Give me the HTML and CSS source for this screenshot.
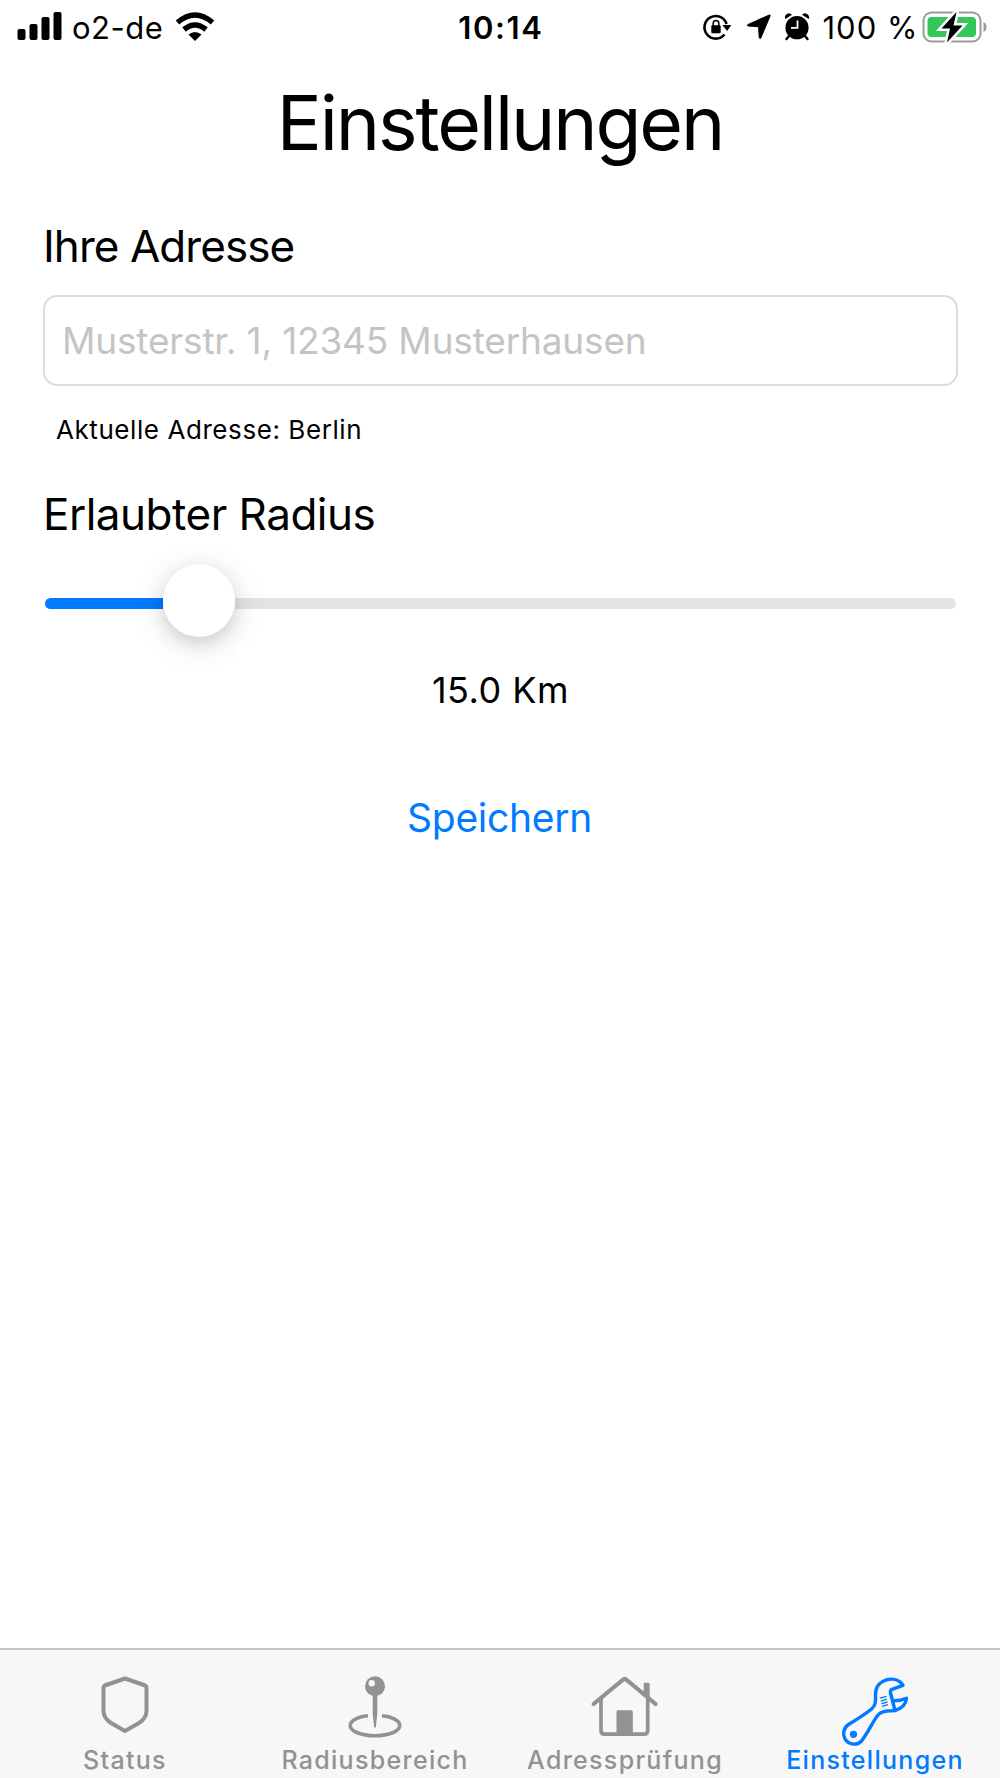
FILE: index.html
```html
<!DOCTYPE html>
<html lang="de">
<head>
    <meta charset="UTF-8">
    <title>Einstellungen</title>
    <link rel="stylesheet" href="styles.css">
</head>
<body>
    <!-- Status bar -->
    <div class="status-bar">
        <svg class="signal" width="46" height="30" viewBox="0 0 46 30">
            <rect x="0.5" y="18" width="8" height="11" rx="2"/>
            <rect x="12.5" y="13" width="8" height="16" rx="2"/>
            <rect x="24.5" y="6" width="8" height="23" rx="2"/>
            <rect x="36.5" y="1" width="8" height="28" rx="2"/>
        </svg>
        <span class="carrier">o2-de</span>
        <svg class="wifi" width="40" height="30" viewBox="0 0 40 30">
            <path d="M2.5 10.5 Q20 -4.5 37.5 10.5" fill="none" stroke="#000" stroke-width="5.5"/>
            <path d="M9 17.5 Q20 8.5 31 17.5" fill="none" stroke="#000" stroke-width="5.5"/>
            <path d="M13.5 22.5 Q20 17.5 26.5 22.5 L20 29 Z"/>
        </svg>
        <span class="time">10:14</span>
        <svg class="lock" width="30" height="28" viewBox="0 0 30 28">
            <path d="M22.5 21.5 A11.3 11.3 0 1 1 24.6 11" fill="none" stroke="#000" stroke-width="2.6"/>
            <path d="M20.3 12 H29.2 L25.2 18 Z"/>
            <rect x="9.3" y="12.3" width="9.4" height="8" rx="1.2"/>
            <path d="M11.2 13 V10.5 a2.8 3 0 0 1 5.6 0 V13" fill="none" stroke="#000" stroke-width="1.5"/>
        </svg>
        <svg class="arrow" width="26" height="26" viewBox="0 0 26 26">
            <path d="M24.3 1.5 L14.8 24 Q13.8 25.3 13.2 23.5 L12.6 12.7 L2 12 Q0.500 11.500 2 10.5 L23.3 1 Z" stroke="#000" stroke-linejoin="round"/>
        </svg>
        <svg class="alarm" width="26" height="28" viewBox="0 0 26 28">
            <circle cx="13" cy="14.7" r="11.6"/>
            <path d="M1.3 6 A4 4 0 0 1 8 1.8 Z M24.7 6 A4 4 0 0 0 18 1.8 Z"/>
            <path d="M5 23 L2.5 26 M21 23 L23.5 26" stroke="#000" stroke-width="2.4" stroke-linecap="round"/>
            <path d="M13.5 7.5 V14.8 H7" fill="none" stroke="#fff" stroke-width="1.8"/>
        </svg>
        <span class="percent">100 %</span>
        <svg class="battery" width="66" height="34" viewBox="0 0 66 34">
            <rect x="1.5" y="2.5" width="57" height="29" rx="8" fill="none" stroke="#9b9b9b" stroke-width="2"/>
            <rect x="5.5" y="7" width="48.5" height="20" rx="4" fill="#34c759"/>
            <path d="M61.5 12 q3 1 3 5 t-3 5 Z" fill="#9b9b9b"/>
            <path d="M34.5 2 L19.5 18.5 H28 L25 32.5 L40.5 15.5 H31.5 Z" stroke="#fff" stroke-width="5" paint-order="stroke"/>
        </svg>
    </div>

    <h1>Einstellungen</h1>

    <form class="settings">
        <label for="address">Ihre Adresse</label>
        <input type="text" id="address" placeholder="Musterstr. 1, 12345 Musterhausen">
        <p class="current">Aktuelle Adresse: Berlin</p>

        <label class="radius">Erlaubter Radius</label>
        <div class="slider">
            <div class="fill"></div>
            <div class="thumb"></div>
            <div class="rest"></div>
        </div>
        <p class="value">15.0 Km</p>
        <button type="button">Speichern</button>
    </form>

    <!-- Bottom tabs -->
    <nav class="tabs">
        <a class="tab">
            <svg width="100" height="80" viewBox="0 0 100 80">
                <path d="M50 10.5 L70.3 17.5 Q71.5 18 71.5 19.5 V43 Q71.5 50 64 55 L50 63 L36 55 Q28.5 50 28.5 43 V19.5 Q28.5 18 29.7 17.5 Z" fill="none" stroke="#929292" stroke-width="4" stroke-linejoin="round"/>
            </svg>
            <span>Status</span>
        </a>
        <a class="tab">
            <svg width="100" height="80" viewBox="0 0 100 80">
                <path d="M43 47.8 C32 48.8 25.2 53 25.2 57.5 C25.2 63.2 36 67.7 50 67.7 S74.8 63.2 74.8 57.5 C74.8 53 68 48.8 57 47.8" fill="none" stroke="#929292" stroke-width="3.6"/>
                <path d="M47.7 26 H52.3 V46 L50.8 59.5 H49.2 L47.7 46 Z" fill="#929292"/>
                <circle cx="50" cy="18.3" r="10" fill="#929292"/>
                <circle cx="46.7" cy="15.3" r="3.2" fill="#f7f7f7"/>
            </svg>
            <span>Radiusbereich</span>
        </a>
        <a class="tab">
            <svg width="100" height="80" viewBox="0 0 100 80">
                <path d="M26 31 V62.5 Q26 66.2 29.7 66.2 H69 Q72.7 66.2 72.7 62.5 V31" fill="none" stroke="#929292" stroke-width="3.7"/>
                <path d="M18.6 36 L48.3 11.5 Q49.7 10.5 51 11.5 L80.6 36" fill="none" stroke="#929292" stroke-width="4.2" stroke-linecap="round"/>
                <rect x="41.5" y="42.3" width="16.3" height="25" rx="1.5" fill="#929292"/>
                <path d="M68.7 26 V16 Q68.7 14.7 70 14.7 H73.4 Q74.7 14.7 74.7 16 V31 Z" fill="#929292"/>
            </svg>
            <span>Adressprüfung</span>
        </a>
        <a class="tab active">
            <svg width="100" height="80" viewBox="0 0 100 80">
                <path d="M70 42.5 L65.5 25 Q65 22.5 67 21.3 L78 17.3 C74.5 12 68 10 61 12 C54 14.5 50.3 20 50.5 27 C50.8 34 50.5 37.5 46.5 41 C40 46.5 30 52.5 23.5 56.5 C18.5 60 17.5 66 19.8 70.5 C23.5 77.5 32.5 77.5 36.5 73 C42 66 45 59.5 49.5 52 C53 46 56 43.5 62 43 C65 42.8 67 43 70 42.5 C77 40.5 81 36 81.5 30.2 Q76 32.800 69 32.800" fill="none" stroke="#007aff" stroke-width="3.4" stroke-linejoin="round"/>
                <circle cx="28.5" cy="66.3" r="3.6" fill="#007aff"/>
                <path d="M55 30.2 L61.5 28.4 M55.7 33 L62 31.2 M56.4 35.7 L62.5 34 M57 38.3 L63 36.6" stroke="#007aff" stroke-width="1.3"/>
            </svg>
            <span>Einstellungen</span>
        </a>
    </nav>
</body>
</html>
```
FILE: styles.css
```css
* { box-sizing: border-box; }
body {
    margin: 0;
    height: 1778px;
    display: flex;
    flex-direction: column;
    background-color: #fff;
    color: #000;
    font-family: Inter, "Liberation Sans", sans-serif;
}
svg { display: block; flex: none; }

.status-bar {
    height: 54px;
    display: flex;
    align-items: center;
    padding-left: 17px;
    font-size: 31px;
    white-space: nowrap;
}
.signal { margin-top: -2px; }
.carrier {
    margin-left: 9px;
    letter-spacing: 0.5px;
}
.wifi { margin-left: 12px; }
.time {
    font-weight: 600;
    letter-spacing: 1.6px;
    margin-left: 243px;
}
.lock { margin-left: 158px; }
.arrow { margin-left: 14px; }
.alarm { margin-left: 12px; }
.percent {
    margin-left: 13px;
    letter-spacing: 1px;
}
.battery { margin-left: 4px; }

h1 {
    margin: 21px 0 0;
    height: 95px;
    line-height: 96px;
    font-size: 75px;
    font-weight: 400;
    letter-spacing: -2.1px;
    text-align: center;
}

.settings {
    display: flex;
    flex-direction: column;
    padding: 48px 42px 0 43px;
}
label {
    height: 56px;
    line-height: 56px;
    font-size: 44px;
    letter-spacing: -0.95px;
}
label.radius { letter-spacing: -0.5px; }
#address {
    height: 91px;
    margin-top: 21px;
    padding: 0 17px;
    border: 2px solid #dcdcdd;
    border-radius: 14px;
    font: inherit;
    font-size: 37px;
    letter-spacing: -0.17px;
}
#address::placeholder { color: #c4c4c6; }
.current {
    margin: 24px 0 36px 13px;
    line-height: 40px;
    font-size: 26px;
    letter-spacing: 0.57px;
}
.slider {
    display: flex;
    margin: 22px 2px 0;
}
.fill, .rest {
    height: 11px;
    margin-top: 34px;
}
.fill {
    width: 118px;
    background-color: #007aff;
    border-radius: 6px 0 0 6px;
}
.rest {
    flex: 1;
    background-color: #e3e3e5;
    border-radius: 0 6px 6px 0;
}
.thumb {
    width: 72px;
    height: 73px;
    border-radius: 50%;
    background-color: #fff;
    box-shadow: 0 6px 34px rgba(0, 0, 0, 0.14), 0 7px 16px rgba(0, 0, 0, 0.1);
    clip-path: polygon(-36px -20px, 104px -20px, 104px 82px, 72px 82px, 72px 112px, -36px 112px);
}
.value {
    margin: 28px 0 0;
    line-height: 50px;
    font-size: 36px;
    letter-spacing: 0.5px;
    text-align: center;
}
button {
    height: 60px;
    margin-top: 72px;
    padding: 0 2px 0 0;
    border: none;
    background: none;
    color: #007aff;
    font: inherit;
    font-size: 39px;
    letter-spacing: -0.3px;
}

.tabs {
    height: 130px;
    margin-top: auto;
    display: grid;
    grid-template-columns: repeat(4, 1fr);
    background-color: #f7f7f7;
    border-top: 2px solid #c4c4c4;
}
.tab {
    display: flex;
    flex-direction: column;
    align-items: center;
    padding-top: 18px;
    color: #929292;
    font-size: 25px;
    font-weight: 500;
    letter-spacing: 1.3px;
    line-height: 24px;
}
.tab.active { color: #007aff; }
```
